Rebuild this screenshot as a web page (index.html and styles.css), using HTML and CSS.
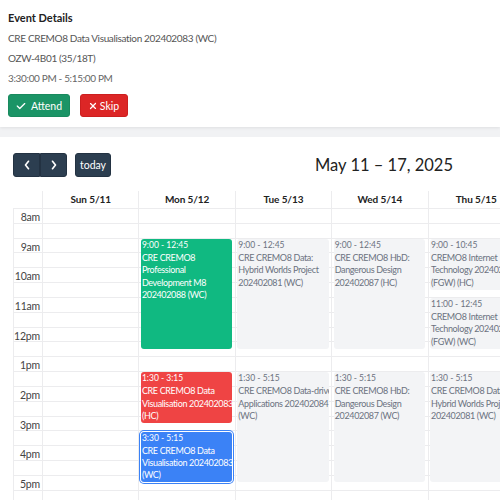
FILE: index.html
```html
<!DOCTYPE html>
<html>
<head>
<meta charset="utf-8">
<link rel="stylesheet" href="styles.css">
</head>
<body>
<section class="details">
  <h2 class="details-title">Event Details</h2>
  <p class="details-line">CRE CREMO8 Data Visualisation 202402083 (WC)</p>
  <p class="details-line">OZW-4B01 (35/18T)</p>
  <p class="details-line details-time">3:30:00 PM - 5:15:00 PM</p>
  <div class="actions">
    <button class="btn btn-attend"><svg class="btn-icon" viewBox="0 0 448 512"><path fill="currentColor" d="M438.6 105.4c12.5 12.5 12.5 32.8 0 45.3l-256 256c-12.5 12.5-32.8 12.5-45.3 0l-128-128c-12.5-12.5-12.5-32.8 0-45.3s32.8-12.5 45.3 0L160 338.7 393.4 105.4c12.5-12.5 32.8-12.5 45.3 0z"/></svg><span>Attend</span></button>
    <button class="btn btn-skip"><svg class="btn-icon btn-icon-x" viewBox="0 0 384 512"><path fill="currentColor" d="M342.6 150.6c12.5-12.5 12.5-32.8 0-45.3s-32.8-12.5-45.3 0L192 210.7 86.6 105.4c-12.5-12.5-32.8-12.5-45.3 0s-12.5 32.8 0 45.3L146.7 256 41.4 361.4c-12.5 12.5-12.5 32.8 0 45.3s32.8 12.5 45.3 0L192 301.3 297.4 406.6c12.5 12.5 32.8 12.5 45.3 0s12.5-32.8 0-45.3L237.3 256 342.6 150.6z"/></svg><span>Skip</span></button>
  </div>
</section>

<section class="calendar">
  <div class="toolbar">
    <div class="toolbar-left">
      <div class="btn-group">
        <button class="fc-btn fc-arrow"><svg viewBox="0 0 10 16" class="chev"><path d="M7 3 L3 8 L7 13" fill="none" stroke="currentColor" stroke-width="2.2" stroke-linecap="round" stroke-linejoin="round"/></svg></button>
        <button class="fc-btn fc-arrow"><svg viewBox="0 0 10 16" class="chev"><path d="M3 3 L7 8 L3 13" fill="none" stroke="currentColor" stroke-width="2.2" stroke-linecap="round" stroke-linejoin="round"/></svg></button>
      </div>
      <button class="fc-btn fc-today">today</button>
    </div>
    <h1 class="fc-title">May 11 – 17, 2025</h1>
  </div>

  <div class="grid">
    <div class="head">
      <div class="head-axis"></div>
      <div class="head-cell">Sun 5/11</div>
      <div class="head-cell">Mon 5/12</div>
      <div class="head-cell">Tue 5/13</div>
      <div class="head-cell">Wed 5/14</div>
      <div class="head-cell">Thu 5/15</div>
      <div class="head-cell">Fri 5/16</div>
      <div class="head-cell">Sat 5/17</div>
    </div>
    <div class="body">
      <div class="slats">
        <div class="slat"><span class="slat-label">8am</span></div><div class="slat"></div>
        <div class="slat"><span class="slat-label">9am</span></div><div class="slat"></div>
        <div class="slat"><span class="slat-label">10am</span></div><div class="slat"></div>
        <div class="slat"><span class="slat-label">11am</span></div><div class="slat"></div>
        <div class="slat"><span class="slat-label">12pm</span></div><div class="slat"></div>
        <div class="slat"><span class="slat-label">1pm</span></div><div class="slat"></div>
        <div class="slat"><span class="slat-label">2pm</span></div><div class="slat"></div>
        <div class="slat"><span class="slat-label">3pm</span></div><div class="slat"></div>
        <div class="slat"><span class="slat-label">4pm</span></div><div class="slat"></div>
        <div class="slat"><span class="slat-label">5pm</span></div><div class="slat"></div>
        <div class="slat"><span class="slat-label">6pm</span></div><div class="slat"></div>
      </div>
      <div class="cols">
        <div class="cols-axis"></div>
        <div class="col"></div>
        <div class="col">
          <div class="ev ev-green" style="top:30.7px;height:110.2px"><div class="ev-time">9:00 - 12:45</div><div class="ev-title"><span>CRE CREMO8</span> <span>Professional</span> <span>Development M8</span> <span>202402088 (WC)</span></div></div>
          <div class="ev ev-red" style="top:164.2px;height:50.9px"><div class="ev-time">1:30 - 3:15</div><div class="ev-title"><span>CRE CREMO8 Data</span> <span>Visualisation 202402083</span> <span>(HC)</span></div></div>
          <div class="ev ev-blue" style="top:223.5px;height:50.9px"><div class="ev-time">3:30 - 5:15</div><div class="ev-title"><span>CRE CREMO8 Data</span> <span>Visualisation 202402083</span> <span>(WC)</span></div></div>
        </div>
        <div class="col">
          <div class="ev ev-gray" style="top:30.7px;height:110.2px"><div class="ev-time">9:00 - 12:45</div><div class="ev-title"><span>CRE CREMO8 Data:</span> <span>Hybrid Worlds Project</span> <span>202402081 (WC)</span></div></div>
          <div class="ev ev-gray" style="top:164.2px;height:110.2px"><div class="ev-time">1:30 - 5:15</div><div class="ev-title"><span>CRE CREMO8 Data-drive</span> <span>Applications 202402084</span> <span>(WC)</span></div></div>
        </div>
        <div class="col">
          <div class="ev ev-gray" style="top:30.7px;height:110.2px"><div class="ev-time">9:00 - 12:45</div><div class="ev-title"><span>CRE CREMO8 HbD:</span> <span>Dangerous Design</span> <span>202402087 (HC)</span></div></div>
          <div class="ev ev-gray" style="top:164.2px;height:110.2px"><div class="ev-time">1:30 - 5:15</div><div class="ev-title"><span>CRE CREMO8 HbD:</span> <span>Dangerous Design</span> <span>202402087 (WC)</span></div></div>
        </div>
        <div class="col">
          <div class="ev ev-gray" style="top:30.7px;height:50.9px"><div class="ev-time">9:00 - 10:45</div><div class="ev-title"><span>CREMO8 Internet</span> <span>Technology 202402085</span> <span>(FGW) (HC)</span></div></div>
          <div class="ev ev-gray" style="top:90px;height:50.9px"><div class="ev-time">11:00 - 12:45</div><div class="ev-title"><span>CREMO8 Internet</span> <span>Technology 202402085</span> <span>(FGW) (WC)</span></div></div>
          <div class="ev ev-gray" style="top:164.2px;height:110.2px"><div class="ev-time">1:30 - 5:15</div><div class="ev-title"><span>CRE CREMO8 Data:</span> <span>Hybrid Worlds Project</span> <span>202402081 (WC)</span></div></div>
        </div>
        <div class="col"></div>
        <div class="col"></div>
      </div>
    </div>
  </div>
</section>
</body>
</html>
```

FILE: styles.css
```css
* { box-sizing: border-box; }
html, body { overflow: hidden; }
body {
  margin: 0;
  background: #f1f2f4;
  font-family: Lato, "Open Sans", sans-serif;
  color: #212529;
  width: 500px;
  height: 500px;
}

.details {
  background: #fff;
  padding: 8px 8px 10px;
  box-shadow: 0 1px 3px rgba(0,0,0,0.08);
  height: 127px;
}
.details-title {
  margin: 0;
  font-size: 11px;
  line-height: 20px;
  font-weight: 700;
  color: #222;
}
.details-line {
  margin: 0;
  font-size: 10px;
  letter-spacing: -0.35px;
  line-height: 20px;
  color: #555;
}
.details-time { color: #666; }
.actions {
  display: flex;
  gap: 10px;
  margin-top: 6px;
}
.btn {
  display: flex;
  align-items: center;
  justify-content: center;
  gap: 5px;
  height: 23px;
  padding: 0;
  border: 1px solid transparent;
  border-radius: 3px;
  color: #fff;
  font-family: inherit;
  font-size: 10.5px;
  cursor: pointer;
}
.btn-icon { width: 10px; height: 10px; flex-shrink: 0; }
.btn-icon-x { width: 8px; }
.btn-attend { background: #1b9466; border-color: #198a5e; width: 62px; }
.btn-skip { background: #dc2626; border-color: #cc1f1f; width: 48px; gap: 3px; }

.calendar {
  background: #fff;
  margin-top: 10px;
  padding: 16px 0 0 13px;
  height: 400px;
}
.toolbar {
  display: flex;
  align-items: center;
  height: 24px;
  margin-bottom: 14px;
}
.toolbar-left { display: flex; gap: 8px; }
.btn-group { display: flex; }
.fc-btn {
  background: #2c3e50;
  border: 1px solid #233242;
  color: #fff;
  font-family: inherit;
  height: 24px;
  padding: 0;
}
.fc-arrow { width: 27px; display: flex; align-items: center; justify-content: center; }
.btn-group .fc-arrow:first-child { border-radius: 3px 0 0 3px; }
.btn-group .fc-arrow:last-child { border-radius: 0 3px 3px 0; }
.chev { width: 8px; height: 12px; }
.fc-today { width: 36px; border-radius: 3px; font-size: 10.5px; }
.fc-title {
  margin: 0 0 0 204px;
  font-size: 16.5px;
  font-weight: 400;
  color: #222;
  white-space: nowrap;
}

.grid { width: 704px; }
.head {
  display: grid;
  grid-template-columns: 29px repeat(7, 96.4px);
  height: 17px;
}
.head-cell {
  border-left: 1px solid #ececee;
  font-size: 10px;
  letter-spacing: -0.1px;
  font-weight: 700;
  text-align: center;
  line-height: 17px;
  color: #222;
}
.body {
  position: relative;
  border-left: 1px solid #ececee;
}
.slat {
  height: 14.83px;
  border-top: 1px solid #ececee;
  width: 704px;
}
.slat-label {
  display: block;
  width: 28px;
  text-align: right;
  padding-right: 2px;
  font-size: 10.5px;
  letter-spacing: -0.2px;
  line-height: 16px;
  color: #444;
}
.cols {
  position: absolute;
  inset: 0;
  display: grid;
  grid-template-columns: 28px repeat(7, 96.4px);
}
.col {
  position: relative;
  border-left: 1px solid #ececee;
}
.ev {
  position: absolute;
  left: 1.5px;
  right: 2.5px;
  border-radius: 3px;
  padding: 1px 0 1px 1px;
  overflow: hidden;
  font-size: 9px;
  letter-spacing: -0.35px;
}
.ev-time { font-size: 8.5px; letter-spacing: 0; line-height: 11px; }
.ev-title { line-height: 12.4px; margin-top: 1px; }
.ev-title span { display: block; white-space: nowrap; }
.ev-green { background: #10b981; color: #fff; }
.ev-red { background: #ef4444; color: #fff; }
.ev-blue { background: #3b82f6; color: #fff; box-shadow: 0 0 0 1px #fff, 0 0 0 2px #3b82f6; }
.ev-gray { background: #f3f4f6; color: #6b7280; }
```
